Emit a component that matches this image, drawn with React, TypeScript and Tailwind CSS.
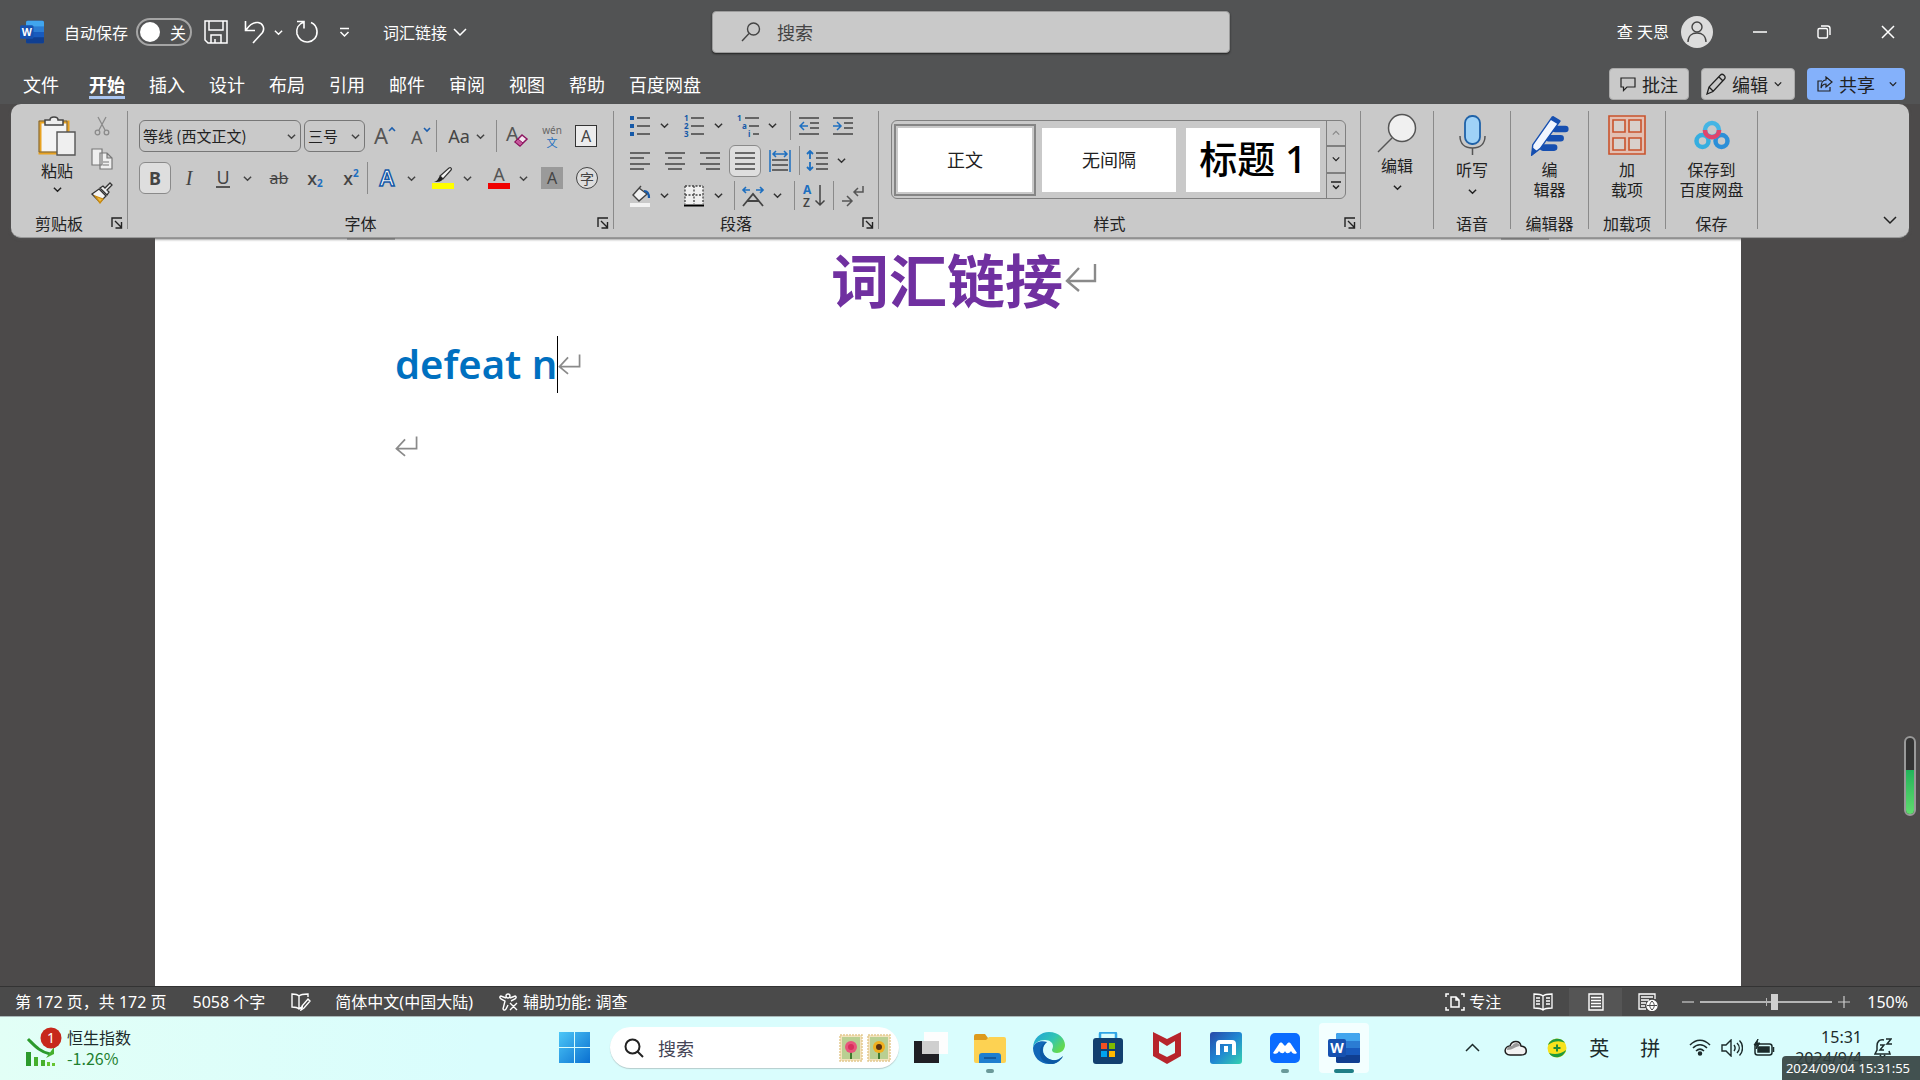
import React from 'react';

type Kids = { children?: React.ReactNode };

/* ---------- Small shared pieces ---------- */

const Caret = ({ size = 9 }: { size?: number }) => (
  <svg width={size} height={size} viewBox="0 0 10 10" fill="none" stroke="currentColor" strokeWidth="1.6">
    <path d="M1 3l4 4 4-4" />
  </svg>
);

const Launcher = ({ label }: { label: string }) => (
  <button aria-label={label} className="mr-1 shrink-0 text-[#222]">
    <svg width="12" height="12" viewBox="0 0 12 12" fill="none" stroke="currentColor" strokeWidth="1.4">
      <path d="M1 10V1h10M4 4l6 6M10.500 5v6H4.500" />
    </svg>
  </button>
);

const Sep = () => <div className="w-px self-stretch bg-[#8a8a8a]" />;

const Tool = ({ label, active, children }: Kids & { label: string; active?: boolean }) => (
  <button
    aria-label={label}
    className={
      active
        ? 'flex h-8 w-8 items-center justify-center rounded-md border border-[#8a8a8a] bg-[#dedede]'
        : 'flex h-8 w-8 items-center justify-center rounded-md'
    }
  >
    {children}
  </button>
);

const SplitTool = ({ label, children }: Kids & { label: string }) => (
  <div className="flex h-8 items-center">
    <button aria-label={label} className="flex h-8 w-8 items-center justify-center">
      {children}
    </button>
    <button aria-label={`${label}选项`} className="flex h-8 w-4 items-center justify-center">
      <Caret />
    </button>
  </div>
);

const GroupFooter = ({ label, launcher = true }: { label: string; launcher?: boolean }) => (
  <div className="mt-auto flex h-3 items-center">
    <span className={launcher ? 'flex-1 pr-1 text-center text-base leading-3 whitespace-nowrap' : 'flex-1 text-center text-base leading-3 whitespace-nowrap'}>
      {label}
    </span>
    {launcher && <Launcher label={`${label}设置`} />}
  </div>
);

const WordIcon = ({ size }: { size: number }) => (
  <svg width={size} height={size} viewBox="0 0 32 32">
    <rect x="8" y="1" width="24" height="30" rx="2" fill="#185abd" />
    <path d="M10 1h20a2 2 0 012 2v6H8V3a2 2 0 012-2z" fill="#41a5ee" />
    <path d="M8 9h24v7H8z" fill="#2b7cd3" />
    <path d="M8 23h24v6a2 2 0 01-2 2H10a2 2 0 01-2-2z" fill="#103f91" />
    <rect x="0" y="7" width="18" height="18" rx="2" fill="#1651b0" />
    <text x="9" y="21" textAnchor="middle" fontSize="14" fontWeight="700" fill="#fff" fontFamily="Open Sans, sans-serif">
      W
    </text>
  </svg>
);

const ReturnMark = ({ width, height }: { width: number; height: number }) => (
  <svg width={width} height={height} viewBox="0 0 32 28" fill="none" stroke="#8a8a8a" strokeWidth="2.400">
    <path d="M30 0v17H2M14 4L2 17l12 10" />
  </svg>
);

/* ---------- Title bar ---------- */

const TitleBar = () => (
  <div className="grid h-16 grid-cols-[712fr_518fr_690fr] items-center text-white">
    <div className="flex items-center pl-5 text-base leading-5 whitespace-nowrap">
      <WordIcon size={24} />
      <label className="ml-5 flex items-center gap-2">
        自动保存
        <input type="checkbox" className="sr-only" />
        <span className="flex h-7 w-14 items-center justify-between rounded-full border-2 border-[#a5a5a5] pr-1 pl-0.5">
          <span className="h-5 w-5 rounded-full bg-white" />
          <span>关</span>
        </span>
      </label>
      <button aria-label="保存" className="ml-3">
        <svg width="24" height="24" viewBox="0 0 24 24" fill="none" stroke="currentColor" strokeWidth="1.5">
          <path d="M1 1h22v22H4l-3-3zM5 1v9h14V1M7 23v-8h10v8M11 19v4" />
        </svg>
      </button>
      <button aria-label="撤消" className="ml-4">
        <svg width="22" height="24" viewBox="0 0 22 24" fill="none" stroke="currentColor" strokeWidth="1.6">
          <path d="M1.500 1v9.500H11M2 10C6 4 10 2 14 2.500c5 .7 7 6 4.500 10L9 23" />
        </svg>
      </button>
      <button aria-label="撤消选项" className="ml-2">
        <Caret />
      </button>
      <button aria-label="重复" className="ml-3">
        <svg width="24" height="24" viewBox="0 0 24 24" fill="none" stroke="currentColor" strokeWidth="1.6">
          <path d="M2 1.500h7v7M9 2C3 4 1 9 2 14c1.500 5 6 8.500 11 8 5.500-.7 9.500-5 9-11-.3-4-2.500-7-6-8.500" />
        </svg>
      </button>
      <button aria-label="自定义快速访问工具栏" className="ml-5">
        <svg width="11" height="11" viewBox="0 0 11 11" fill="none" stroke="currentColor" strokeWidth="1.5">
          <path d="M1 1.500h9M1.500 5l4 4 4-4" />
        </svg>
      </button>
      <button className="ml-[33px] flex items-center gap-1.5">
        词汇链接
        <svg width="14" height="8" viewBox="0 0 14 8" fill="none" stroke="currentColor" strokeWidth="1.5">
          <path d="M1 1l6 6 6-6" />
        </svg>
      </button>
    </div>

    <label className="flex h-[42px] items-center gap-4 rounded border border-[#9c9c9c] bg-[#c9c9c9] pl-7 text-[#444] shadow-[0_1px_2px_#222]">
      <svg width="20" height="20" viewBox="0 0 20 20" fill="none" stroke="currentColor" strokeWidth="1.4">
        <circle cx="12.500" cy="7" r="6" />
        <path d="M8 11.500L1 19" />
      </svg>
      <input
        type="search"
        aria-label="搜索"
        placeholder="搜索"
        className="min-w-0 flex-1 bg-transparent text-lg leading-6 outline-none placeholder:text-[#444]"
      />
    </label>

    <div className="flex items-center justify-end pr-[25px]">
      <button className="mr-10 flex items-center gap-3 font-['Noto_Sans','Noto_Sans_CJK_SC',sans-serif] text-base leading-5 whitespace-nowrap">
        查 天恩
        <span className="flex h-8 w-8 items-center justify-center rounded-full bg-[#dcdcdc]">
          <svg width="20" height="22" viewBox="0 0 20 22" fill="none" stroke="#444" strokeWidth="1.4">
            <circle cx="10" cy="6" r="5" />
            <path d="M1 21c0-6 4-9 9-9s9 3 9 9" />
          </svg>
        </span>
      </button>
      <div className="flex items-center gap-[50px]">
        <button aria-label="最小化">
          <svg width="14" height="14" viewBox="0 0 14 14" stroke="currentColor" strokeWidth="1.500">
            <path d="M0 7h14" />
          </svg>
        </button>
        <button aria-label="还原">
          <svg width="14" height="14" viewBox="0 0 14 14" fill="none" stroke="currentColor" strokeWidth="1.400">
            <rect x="1" y="3.500" width="9.500" height="9.500" rx="1.500" />
            <path d="M4 1h6.500c1.700 0 2.500 1 2.500 2.500V10" />
          </svg>
        </button>
        <button aria-label="关闭">
          <svg width="14" height="14" viewBox="0 0 14 14" stroke="currentColor" strokeWidth="1.500">
            <path d="M1 1l12 12M13 1L1 13" />
          </svg>
        </button>
      </div>
    </div>
  </div>
);

const tabs = ['开始', '插入', '设计', '布局', '引用', '邮件', '审阅', '视图', '帮助', '百度网盘'];

const TabRow = () => (
  <div className="flex h-10 items-center pr-[15px] pl-[23px] text-lg leading-6 text-white">
    <button className="mr-[30px]">文件</button>
    <nav className="flex gap-6">
      {tabs.map((t) => (
        <button
          key={t}
          className={
            t === '开始'
              ? 'border-b-[3px] border-[#a9c4ee] pt-[3px] font-bold'
              : 'border-b-[3px] border-transparent pt-[3px]'
          }
        >
          {t}
        </button>
      ))}
    </nav>
    <div className="ml-auto flex gap-3 text-[#222]">
      <button className="flex h-8 items-center gap-1.5 rounded border border-[#aaa] bg-[#c9c9c9] px-2.5">
        <svg width="16" height="16" viewBox="0 0 16 16" fill="none" stroke="currentColor" strokeWidth="1.2">
          <path d="M1 2h14v9H7l-3.500 3.500V11H1z" />
        </svg>
        批注
      </button>
      <button className="flex h-8 items-center gap-1.5 rounded border border-[#aaa] bg-[#c9c9c9] pr-3 pl-1">
        <svg width="20" height="22" viewBox="0 0 20 22" fill="none" stroke="currentColor" strokeWidth="1.3">
          <path d="M1 21l2-7L14.500 2c2-2 6 1.500 4 4L7 18.500zM13 4l4 4M3 14l4 4" />
        </svg>
        编辑
        <Caret size={8} />
      </button>
      <button className="flex h-8 items-center gap-1.5 rounded bg-[#84b1fb] pr-2 pl-2.5">
        <svg width="16" height="16" viewBox="0 0 16 16" fill="none" stroke="currentColor" strokeWidth="1.2">
          <path d="M5 5H1v10h12v-4M9 4V1l6 5-6 5V8C7 8 5 9 4 12c0-5 2-8 5-8z" />
        </svg>
        共享
        <span className="ml-2">
          <Caret size={8} />
        </span>
      </button>
    </div>
  </div>
);

/* ---------- Ribbon groups ---------- */

const ClipboardGroup = () => (
  <section className="flex w-[117px] shrink-0 flex-col border-r border-[#8a8a8a]">
    <div className="flex">
      <button className="ml-7 flex w-9 flex-col items-center pt-[5px] text-base leading-5">
        <svg width="38" height="40" viewBox="0 0 38 40" fill="none">
          <path d="M2 6h28v31H2z" fill="#f4f4f4" stroke="#e8a221" strokeWidth="3" />
          <path d="M2 6h28v31H2z" stroke="#555" strokeWidth=".8" transform="translate(-1 -1)" />
          <path d="M7 9V4h5c0-4 8-4 8 0h5v5z" fill="#eee" stroke="#444" strokeWidth="1.500" />
          <path d="M19 16h18v23H19z" fill="#efefef" stroke="#555" strokeWidth="1.400" />
        </svg>
        <span className="mt-1 whitespace-nowrap">粘贴</span>
        <span className="mt-[5px]">
          <Caret />
        </span>
      </button>
      <div className="ml-4 flex flex-col items-center gap-3 pt-[5px]">
        <button aria-label="剪切">
          <svg width="20" height="20" viewBox="0 0 20 20" fill="none" stroke="#8a8a8a" strokeWidth="1.300">
            <path d="M6 1l7 13M14 1L7 14" />
            <circle cx="5.500" cy="16.500" r="2.300" />
            <circle cx="14.500" cy="16.500" r="2.300" />
          </svg>
        </button>
        <button aria-label="复制">
          <svg width="22" height="22" viewBox="0 0 22 22" fill="#efefef" stroke="#777" strokeWidth="1.200">
            <path d="M1 1h10v16H1zM9 5h7l5 5v11H9zM16 5v5h5M12 14h6M12 17h6" />
          </svg>
        </button>
        <button aria-label="格式刷">
          <svg width="22" height="22" viewBox="0 0 22 22" fill="none" stroke="#333" strokeWidth="1.300">
            <path d="M1 12l7-5 7 7-6 6z" fill="#f4f4f4" />
            <path d="M4 14l8 3-3 4z" fill="#f0b93a" stroke="#c98b14" />
            <path d="M9 6l3-2 2 2 5-5 2 2-5 5 2 2-2 3z" fill="#eee" />
          </svg>
        </button>
      </div>
    </div>
    <GroupFooter label="剪贴板" />
  </section>
);

const FontSelect = ({ id, value, wide }: { id: string; value: string; wide?: boolean }) => (
  <div
    className={
      wide
        ? 'grid h-8 w-[162px] items-center rounded-md border border-[#777]'
        : 'grid h-8 w-[61px] items-center rounded-md border border-[#777]'
    }
  >
    <select id={id} aria-label={id} className="col-start-1 row-start-1 appearance-none pl-[3px] text-[15px] leading-6 text-[#222]">
      <option>{value}</option>
    </select>
    <span className="pointer-events-none col-start-1 row-start-1 mr-1 justify-self-end">
      <Caret />
    </span>
  </div>
);

const FontGroup = () => (
  <section className="flex w-[486px] shrink-0 flex-col border-r border-[#8a8a8a] text-[#444]">
    <div className="flex flex-col gap-2.5 pt-[9px] pl-[11px]">
      <div className="flex h-8 items-center">
        <FontSelect id="字体名称" value="等线 (西文正文)" wide />
        <div className="ml-[3px]">
          <FontSelect id="字号" value="三号" />
        </div>
        <button aria-label="增大字号" className="flex w-10 justify-center">
          <svg width="22" height="22" viewBox="0 0 22 22" className="overflow-visible">
            <text x="0" y="19" fontSize="22" fill="#555" fontFamily="Noto Sans, sans-serif">A</text>
            <path d="M15 6l3-3 3 3" fill="none" stroke="#1d5fae" strokeWidth="1.600" />
          </svg>
        </button>
        <button aria-label="减小字号" className="flex w-[31px] justify-center">
          <svg width="20" height="22" viewBox="0 0 20 22" className="overflow-visible">
            <text x="0" y="19" fontSize="18" fill="#555" fontFamily="Noto Sans, sans-serif">A</text>
            <path d="M13 3l3 3 3-3" fill="none" stroke="#1d5fae" strokeWidth="1.600" />
          </svg>
        </button>
        <Sep />
        <button aria-label="更改大小写" className="flex w-[59px] items-center justify-center gap-1.5 font-['Noto_Sans'] text-lg leading-6">
          Aa
          <Caret />
        </button>
        <Sep />
        <button aria-label="清除所有格式" className="ml-0.5 flex w-9 justify-center">
          <svg width="22" height="24" viewBox="0 0 22 24" className="overflow-visible">
            <text x="0" y="17" fontSize="20" fill="#555" fontFamily="Noto Sans, sans-serif">A</text>
            <path d="M9 18l7-7 5 4-7 7z" fill="#f4e6ef" stroke="#8d1560" strokeWidth="1.500" />
            <path d="M9 18l3-3 5 4-3 3z" fill="#c5579a" stroke="#8d1560" />
          </svg>
        </button>
        <button aria-label="拼音指南" className="flex w-[34px] flex-col items-center">
          <span className="font-['Noto_Sans'] text-[10px] leading-3 text-[#666]">wén</span>
          <span className="text-[11px] leading-3 text-[#1d6fc0]">文</span>
        </button>
        <button aria-label="字符边框" className="flex w-[34px] justify-center">
          <span className="flex h-[22px] w-[22px] items-center justify-center border border-[#333] bg-[#ececec] font-['Noto_Sans'] text-base leading-5">
            A
          </span>
        </button>
      </div>
      <div className="flex h-8 items-center">
        <Tool label="加粗" active>
          <span className="font-['Noto_Sans'] text-lg leading-6 font-bold">B</span>
        </Tool>
        <div className="ml-0.5">
          <Tool label="倾斜">
            <span className="font-['Liberation_Serif'] text-xl leading-6 italic">I</span>
          </Tool>
        </div>
        <div className="ml-0.5">
          <SplitTool label="下划线">
            <span className="border-b-2 border-[#555] font-['Noto_Sans'] text-lg leading-[18px]">U</span>
          </SplitTool>
        </div>
        <div className="ml-2 flex gap-1">
          <Tool label="删除线">
            <span className="font-['Noto_Sans'] text-base leading-5 line-through">ab</span>
          </Tool>
          <Tool label="下标">
            <span className="flex items-end font-['Noto_Sans'] text-lg leading-5 font-medium">
              x<span className="text-[10px] leading-[10px] font-bold text-[#1d6fc0]">2</span>
            </span>
          </Tool>
          <Tool label="上标">
            <span className="flex items-start font-['Noto_Sans'] text-lg leading-5 font-medium">
              x<span className="text-[10px] leading-[10px] font-bold text-[#1d6fc0]">2</span>
            </span>
          </Tool>
        </div>
        <Sep />
        <div className="ml-[3px] flex gap-2">
          <SplitTool label="文本效果">
            <svg width="22" height="22" viewBox="0 0 22 22" className="overflow-visible">
              <text x="11" y="19" textAnchor="middle" fontSize="22" fontWeight="600" fill="#fff" stroke="#1559a8" strokeWidth="1.500" fontFamily="Noto Sans, sans-serif">A</text>
            </svg>
          </SplitTool>
          <SplitTool label="文本突出显示颜色">
            <svg width="22" height="22" viewBox="0 0 22 22">
              <path d="M0 16h22v6H0z" fill="#ff0" />
              <path d="M8 9l9-8c2-1 3 1 2 2l-8 9z" fill="#f4f4f4" stroke="#333" strokeWidth="1.200" />
              <path d="M8 9l3 3c-2 3-5 3-9 3 4-1 4-4 6-6z" fill="#222" />
            </svg>
          </SplitTool>
          <SplitTool label="字体颜色">
            <svg width="22" height="22" viewBox="0 0 22 22" className="overflow-visible">
              <path d="M0 16h22v6H0z" fill="#f00000" />
              <text x="11" y="14" textAnchor="middle" fontSize="18" fill="#555" fontFamily="Noto Sans, sans-serif">A</text>
            </svg>
          </SplitTool>
        </div>
        <div className="ml-[5px] flex gap-[3px]">
          <Tool label="字符底纹">
            <span className="flex h-[22px] w-[22px] items-center justify-center bg-[#9a9a9a] font-['Noto_Sans'] text-base leading-5">A</span>
          </Tool>
          <Tool label="带圈字符">
            <span className="flex h-[22px] w-[22px] items-center justify-center rounded-full border border-[#444] bg-[#ddd] text-sm leading-4">字</span>
          </Tool>
        </div>
      </div>
    </div>
    <div className="mt-auto text-[#222]">
      <GroupFooter label="字体" />
    </div>
  </section>
);

const Lines = ({ d }: { d: string }) => (
  <svg width="20" height="20" viewBox="0 0 20 20" stroke="#444" strokeWidth="1.500">
    <path d={d} />
  </svg>
);

const ParagraphGroup = () => (
  <section className="flex w-[265px] shrink-0 flex-col border-r border-[#8a8a8a]">
    <div className="flex flex-col gap-[6px] pl-2.5 text-[#333]">
      <div className="flex h-[29px] items-center gap-1.5">
        <SplitTool label="项目符号">
          <svg width="22" height="22" viewBox="0 0 22 22">
            <path d="M1 1h4v4H1zM1 9h4v4H1zM1 17h4v4H1z" fill="#1559a8" />
            <path d="M8 3h13M8 11h13M8 19h13" stroke="#444" strokeWidth="1.500" />
          </svg>
        </SplitTool>
        <SplitTool label="编号">
          <svg width="22" height="22" viewBox="0 0 22 22" className="overflow-visible" fill="#1559a8" fontSize="8" fontWeight="700" fontFamily="Noto Sans, sans-serif">
            <text x="1" y="6">1</text>
            <text x="1" y="14">2</text>
            <text x="1" y="22">3</text>
            <path d="M8 3h13M8 11h13M8 19h13" stroke="#444" strokeWidth="1.500" />
          </svg>
        </SplitTool>
        <SplitTool label="多级列表">
          <svg width="22" height="22" viewBox="0 0 22 22" className="overflow-visible" fill="#1559a8" fontSize="8" fontWeight="700" fontFamily="Noto Sans, sans-serif">
            <text x="0" y="6">1</text>
            <text x="5" y="14">a</text>
            <text x="11" y="22">i</text>
            <path d="M8 3h14M12 11h10M16 19h6" stroke="#444" strokeWidth="1.500" />
          </svg>
        </SplitTool>
        <div className="ml-1 self-stretch border-l border-[#8a8a8a]" />
        <div className="-ml-1 flex gap-0.5">
          <Tool label="减少缩进量">
            <svg width="20" height="20" viewBox="0 0 20 20" fill="none" stroke="#444" strokeWidth="1.500">
              <path d="M0 2h20M11 7h9M11 12h9M0 18h20" />
              <path d="M9 10H1M5 6l-4 4 4 4" stroke="#1d6fc0" />
            </svg>
          </Tool>
          <Tool label="增加缩进量">
            <svg width="20" height="20" viewBox="0 0 20 20" fill="none" stroke="#444" strokeWidth="1.500">
              <path d="M0 2h20M11 7h9M11 12h9M0 18h20" />
              <path d="M0 10h8M4 6l4 4-4 4" stroke="#1d6fc0" />
            </svg>
          </Tool>
        </div>
      </div>
      <div className="flex h-[29px] items-center gap-[3px]">
        <Tool label="左对齐">
          <Lines d="M0 2h20M0 7h14M0 13h20M0 18h14" />
        </Tool>
        <Tool label="居中">
          <Lines d="M0 2h20M3 7h14M0 13h20M3 18h14" />
        </Tool>
        <Tool label="右对齐">
          <Lines d="M0 2h20M6 7h14M0 13h20M6 18h14" />
        </Tool>
        <Tool label="两端对齐" active>
          <Lines d="M0 2h20M0 7h20M0 13h20M0 18h20" />
        </Tool>
        <Tool label="分散对齐">
          <svg width="22" height="22" viewBox="0 0 22 22" fill="none" stroke="#444" strokeWidth="1.500">
            <path d="M3 10h16M3 15h16M3 20h16" />
            <path d="M1 0v22M21 0v22M4 4h14M7 1L4 4l3 3M15 1l3 3-3 3" stroke="#1d6fc0" />
          </svg>
        </Tool>
        <Sep />
        <div className="-ml-0.5">
          <SplitTool label="行和段落间距">
            <svg width="22" height="22" viewBox="0 0 22 22" fill="none" stroke="#444" strokeWidth="1.500">
              <path d="M10 3h12M10 8h12M10 14h12M10 19h12" />
              <path d="M4 1v8M1 4l3-3 3 3M4 12v8M1 17l3 3 3-3" stroke="#1d6fc0" strokeWidth="1.800" />
            </svg>
          </SplitTool>
        </div>
      </div>
      <div className="flex h-[29px] items-center">
        <SplitTool label="底纹">
          <svg width="22" height="22" viewBox="0 0 22 22" fill="none">
            <path d="M1 18h20v4H1z" fill="#f2f2f2" />
            <path d="M10 3l8 6-8 7-6-6 8-9" fill="#f2f2f2" stroke="#444" strokeWidth="1.400" />
            <path d="M15 6c4 0 5 3 5 7" stroke="#1559a8" strokeWidth="2.200" />
          </svg>
        </SplitTool>
        <div className="ml-1.5">
          <SplitTool label="边框">
            <svg width="20" height="22" viewBox="0 0 20 22" fill="none">
              <path d="M1 1h18v19H1z" fill="#f0f0f0" />
              <path d="M1 1h18M1 1v18M19 1v18M10 1v18M1 10h18" stroke="#444" strokeDasharray="2 1.500" strokeWidth="1.300" />
              <path d="M0 20.500h20" stroke="#000" strokeWidth="2" />
            </svg>
          </SplitTool>
        </div>
        <div className="ml-2 self-stretch border-l border-[#8a8a8a]" />
        <div className="mr-[9px] ml-0.5">
          <SplitTool label="中文版式">
            <svg width="24" height="22" viewBox="0 0 24 22" fill="none">
              <path d="M2 21L12 9l10 12M6 16h12" stroke="#444" strokeWidth="1.800" />
              <path d="M9 5H2M5 2L2 5l3 3M15 5h7M19 2l3 3-3 3" stroke="#1d6fc0" strokeWidth="1.600" />
            </svg>
          </SplitTool>
        </div>
        <Sep />
        <div className="mx-[3px]">
          <Tool label="排序">
            <svg width="22" height="24" viewBox="0 0 22 24" fill="none" className="overflow-visible">
              <text x="0" y="10" fontSize="12" fontWeight="700" fill="#1d6fc0" fontFamily="Noto Sans, sans-serif">A</text>
              <text x="0" y="23" fontSize="12" fontWeight="600" fill="#444" fontFamily="Noto Sans, sans-serif">Z</text>
              <path d="M17 1v20M12.500 16.500L17 21l4.500-4.500" stroke="#444" strokeWidth="1.500" />
            </svg>
          </Tool>
        </div>
        <Sep />
        <div className="ml-[3px]">
          <Tool label="显示编辑标记">
            <svg width="24" height="22" viewBox="0 0 24 22" fill="none" stroke="#555" strokeWidth="1.500">
              <path d="M22 1v6h-9M17 3l-4 4 4 4M1 16h10M6 11l5 5-5 5" />
            </svg>
          </Tool>
        </div>
      </div>
    </div>
    <GroupFooter label="段落" />
  </section>
);

const StylesGroup = () => (
  <section className="flex w-[482px] shrink-0 flex-col border-r border-[#8a8a8a]">
    <div className="mt-[9px] ml-3 flex h-[79px] w-[455px] overflow-hidden rounded-md border border-[#808080] bg-[#c9c9c9]">
      <div className="flex flex-1 items-center gap-0.5 pl-0.5 text-lg leading-6 text-[#222]">
        <button className="h-[72px] w-[142px] border-2 border-[#858585] p-0.5">
          <span className="flex h-full items-center justify-center bg-white pb-0.5">正文</span>
        </button>
        <button className="h-[72px] w-[142px] p-1">
          <span className="flex h-full items-center justify-center bg-white pb-0.5">无间隔</span>
        </button>
        <button className="h-[72px] w-[142px] p-1">
          <span className="flex h-full items-center justify-center bg-white pb-1 font-['Noto_Sans','Noto_Sans_CJK_SC',sans-serif] text-[38px] leading-10 font-medium text-black">
            标题 1
          </span>
        </button>
      </div>
      <div className="flex w-[19px] flex-col divide-y-2 divide-[#808080] border-l border-[#808080]">
        <button aria-label="上一行" className="flex flex-1 items-center justify-center text-[#888]">
          <svg width="8" height="8" viewBox="0 0 10 10" fill="none" stroke="currentColor" strokeWidth="1.500">
            <path d="M1 7l4-4 4 4" />
          </svg>
        </button>
        <button aria-label="下一行" className="flex flex-1 items-center justify-center">
          <Caret size={8} />
        </button>
        <button aria-label="其他样式" className="flex flex-1 items-center justify-center">
          <svg width="10" height="10" viewBox="0 0 10 10" fill="none" stroke="currentColor" strokeWidth="1.500">
            <path d="M0 1h10M2 4.500l3 3 3-3" />
          </svg>
        </button>
      </div>
    </div>
    <GroupFooter label="样式" />
  </section>
);

const BigGroup = ({ width, label, icon, lines, caret }: { width: string; label: string; icon: React.ReactNode; lines: string[]; caret?: boolean }) => (
  <section className={`flex shrink-0 flex-col border-r border-[#8a8a8a] ${width}`}>
    <button className="flex flex-col items-center text-base">
      <span className={label ? 'flex h-12 items-center' : 'flex h-11 items-center'}>{icon}</span>
      {lines.map((l) => (
        <span key={l} className="leading-5 whitespace-nowrap">
          {l}
        </span>
      ))}
      {caret && (
        <span className="mt-2">
          <Caret />
        </span>
      )}
    </button>
    {label && <GroupFooter label={label} launcher={false} />}
  </section>
);

const MagnifierIcon = () => (
  <svg width="40" height="40" viewBox="0 0 40 40" fill="none" stroke="#555" strokeWidth="1.500">
    <circle cx="25" cy="15" r="13.500" fill="#f0f0f0" />
    <path d="M15 25L1 39" />
  </svg>
);

const MicIcon = () => (
  <svg width="27" height="40" viewBox="0 0 27 40" fill="none">
    <rect x="6" y="1" width="15" height="28" rx="7" fill="#9fd2f7" stroke="#1f62a8" strokeWidth="1.800" />
    <path d="M1 21c0 8 5 12 12.500 12S26 29 26 21M13.500 33v7" stroke="#555" strokeWidth="1.500" />
  </svg>
);

const EditorIcon = () => (
  <svg width="41" height="41" viewBox="0 0 42 44" fill="none">
    <path d="M27 15h11M20 25h13M14 35h12" stroke="#164fb0" strokeWidth="7" strokeLinecap="round" />
    <path d="M3 32L24 2l8 5L11 36l-9 7z" fill="#f1f6ff" stroke="#164fb0" strokeWidth="1.500" />
    <path d="M22 5l3-4 8 5-3 4zM3 35l5 4-7 5z" fill="#164fb0" />
  </svg>
);

const AddinsIcon = () => (
  <svg width="38" height="40" viewBox="0 0 38 40" fill="#e3bfb2" stroke="#c9532c" strokeWidth="1.600">
    <path d="M1 1h36v38H1z" />
    <path d="M5 5h12v12H5zM21 5h12v12H21zM5 23h12v12H5zM21 23h12v12H21z" fill="#d8d0cc" />
  </svg>
);

const NetdiskIcon = () => (
  <svg width="36" height="30" viewBox="0 0 36 30" fill="none" strokeWidth="4.500">
    <circle cx="8.500" cy="21" r="6" stroke="#35aee0" />
    <circle cx="27.500" cy="21" r="6" stroke="#2b8fd8" />
    <circle cx="18" cy="10" r="7" stroke="#45b5e4" />
    <path d="M11 10c0 9.500 14 9.500 14 0" stroke="#e0446c" />
  </svg>
);

const Ribbon = () => (
  <div className="relative z-10 mx-[11px] flex h-[134px] rounded-[10px] border-b border-[#999] bg-[#c9c9c9] pt-[7px] pb-2 text-[#222] shadow-[0_1px_3px_#555]">
    <ClipboardGroup />
    <FontGroup />
    <ParagraphGroup />
    <StylesGroup />
    <BigGroup width="w-[73px]" label="" icon={<MagnifierIcon />} lines={['编辑']} caret />
    <BigGroup width="w-[77px]" label="语音" icon={<MicIcon />} lines={['听写']} caret />
    <BigGroup width="w-[78px]" label="编辑器" icon={<EditorIcon />} lines={['编', '辑器']} />
    <BigGroup width="w-[77px]" label="加载项" icon={<AddinsIcon />} lines={['加', '载项']} />
    <BigGroup width="w-[92px]" label="保存" icon={<NetdiskIcon />} lines={['保存到', '百度网盘']} />
    <button aria-label="折叠功能区" className="mr-3 mb-1 ml-auto self-end">
      <svg width="14" height="9" viewBox="0 0 14 9" fill="none" stroke="currentColor" strokeWidth="1.500">
        <path d="M1 1l6 6 6-6" />
      </svg>
    </button>
  </div>
);

/* ---------- Document ---------- */

const Document = () => (
  <main className="relative flex flex-1 justify-center bg-[#4c4a4a] pr-6">
    <article className="w-full max-w-[1586px] bg-white px-[240px]">
      {/* crop marks at the text margins */}
      <div className="-mx-12 mb-1 flex h-0.5 justify-between">
        <span className="w-12 bg-[#b5b5b5]" />
        <span className="w-12 bg-[#b5b5b5]" />
      </div>
      <h1 className="flex items-center justify-center gap-0.5 pl-8 text-[58px] leading-[68px] font-bold text-[#7030a0]">
        词汇链接
        <ReturnMark width={32} height={28} />
      </h1>
      <p className="mt-[22px] flex items-center font-['Noto_Sans'] text-[40px] leading-[60px] font-semibold text-[#0070c0]">
        defeat n
        <span className="h-[57px] w-px bg-black" />
        <ReturnMark width={23} height={21} />
      </p>
      <p className="flex h-[104px] items-center">
        <ReturnMark width={23} height={21} />
      </p>
    </article>
    <div className="absolute right-1 bottom-[170px] flex h-20 w-3 flex-col justify-end overflow-hidden rounded-md border-2 border-[#999] bg-[#333]">
      <div className="h-11 bg-linear-to-b from-[#1fb45a] to-[#5fdc6e]" />
    </div>
  </main>
);

/* ---------- Status bar ---------- */

const StatusBar = () => (
  <div className="flex h-[30px] items-center border-t border-[#333] bg-[#4a4a4a] pr-3 pl-[15px] font-['Noto_Sans','Noto_Sans_CJK_SC',sans-serif] text-base leading-5 whitespace-nowrap text-white">
    <span>第 172 页，共 172 页</span>
    <span className="ml-[26px]">5058 个字</span>
    <button aria-label="校对" className="ml-[26px]">
      <svg width="20" height="18" viewBox="0 0 20 18" fill="none" stroke="currentColor" strokeWidth="1.400">
        <path d="M8 3C6 1 3 1 1 1v13c2 0 5 0 7 2 1-1 2-2 4-2M8 3c2-2 5-2 9-2v3M8 3v13M17 6l2 2-6 7-3 2 1-4z" />
      </svg>
    </button>
    <button className="ml-6">简体中文(中国大陆)</button>
    <button className="ml-[26px] flex items-center gap-1">
      <svg width="20" height="18" viewBox="0 0 20 18" fill="none" stroke="currentColor" strokeWidth="1.400">
        <circle cx="9" cy="3" r="2" />
        <path d="M7 5L2 3C0 4 1 5 2 6l4 2-2 8c1 2 2 1 3 0l2-4M11 5l5-2c2 1 1 2 0 3l-4 2M11 10l7 7M18 10l-7 7" />
      </svg>
      辅助功能: 调查
    </button>
    <button className="ml-auto flex items-center gap-1">
      <svg width="20" height="18" viewBox="0 0 20 18" fill="none" stroke="currentColor" strokeWidth="1.500">
        <path d="M4 1H1v3M16 1h3v3M4 17H1v-3M16 17h3v-3M6 4h5l3 3v7H6zM11 4v3h3" />
      </svg>
      专注
    </button>
    <button aria-label="阅读视图" className="ml-8">
      <svg width="20" height="18" viewBox="0 0 20 18" fill="none" stroke="currentColor" strokeWidth="1.300">
        <path d="M10 3C8 1 4 1 1 1v14c3 0 7 0 9 2 2-2 6-2 9-2V1c-3 0-7 0-9 2zM10 3v14M3 5h4M3 8h4M3 11h4M13 5h4M13 8h4M13 11h4" />
      </svg>
    </button>
    <button aria-label="页面视图" className="ml-4 flex h-[28px] w-[53px] items-center justify-center bg-[#555]">
      <svg width="16" height="18" viewBox="0 0 16 18" fill="none" stroke="currentColor" strokeWidth="1.400">
        <path d="M1 1h14v16H1zM3 4.500h10M3 7.500h10M3 10.500h10M3 13.500h10" />
      </svg>
    </button>
    <button aria-label="Web 版式视图" className="ml-4">
      <svg width="20" height="18" viewBox="0 0 20 18" fill="none" stroke="currentColor" strokeWidth="1.300">
        <path d="M8 16H1V1h16v5M3 4h12M3 7h8M3 10h5M3 13h4" />
        <circle cx="14" cy="12.500" r="5" fill="#fff" />
        <path d="M9 12.500h10M14 8c-3 3-3 6 0 9 3-3 3-6 0-9" stroke="#4a4a4a" strokeWidth="1" />
      </svg>
    </button>
    <button aria-label="缩小" className="ml-6">
      <svg width="12" height="12" viewBox="0 0 12 12" stroke="#ccc" strokeWidth="1.200">
        <path d="M0 6h12" />
      </svg>
    </button>
    <div className="mx-1.5 grid items-center">
      <span className="col-start-1 row-start-1 ml-[66px] h-2 w-px bg-[#b5b5b5]" />
      <input
        type="range"
        aria-label="显示比例"
        defaultValue={57}
        className="col-start-1 row-start-1 h-5 w-[132px] appearance-none bg-[linear-gradient(#b5b5b5,#b5b5b5)] bg-[length:100%_2px] bg-center bg-no-repeat [&::-webkit-slider-thumb]:h-4 [&::-webkit-slider-thumb]:w-[7px] [&::-webkit-slider-thumb]:appearance-none [&::-webkit-slider-thumb]:bg-[#d0d0d0]"
      />
    </div>
    <button aria-label="放大">
      <svg width="12" height="12" viewBox="0 0 12 12" stroke="#ccc" strokeWidth="1.200">
        <path d="M0 6h12M6 0v12" />
      </svg>
    </button>
    <button className="ml-[17px]">150%</button>
  </div>
);

/* ---------- Taskbar ---------- */

const StoreIcon = () => (
  <svg width="32" height="32" viewBox="0 0 32 32">
    <path d="M8 8V2a1.500 1.500 0 011.500-1.500h13A1.500 1.500 0 0124 2v6" fill="none" stroke="#2fa5e6" strokeWidth="2.500" />
    <rect x="1" y="6" width="30" height="26" rx="3" fill="#12406f" />
    <path d="M9 11h6v6H9z" fill="#f25022" />
    <path d="M17 11h6v6h-6z" fill="#7fba00" />
    <path d="M9 19h6v6H9z" fill="#00a4ef" />
    <path d="M17 19h6v6h-6z" fill="#ffb900" />
  </svg>
);

const EdgeIcon = () => (
  <svg width="32" height="32" viewBox="0 0 32 32">
    <defs>
      <linearGradient id="edgeTop" x1="0" y1="0" x2="1" y2="0.6">
        <stop offset="0" stopColor="#1f9fdc" />
        <stop offset=".6" stopColor="#31c5b4" />
        <stop offset="1" stopColor="#63d94f" />
      </linearGradient>
    </defs>
    <path d="M0 16C0 6 8 0 16 0c10 0 16 7 16 13 0 5-4 8-8 8-3 0-5-1-5-3 0-1 1-2 1-4 0-3-3-6-8-6C6 8 1 11 0 16z" fill="url(#edgeTop)" />
    <path d="M0 16c0 9 7 16 16 16 4 0 8-1 11-4-9 2-17-3-17-10 0-4 2-6 4-8C7 8 1 11 0 16z" fill="#1268b8" />
    <path d="M14 10c-5 3-6 10-2 14 4 5 12 6 18 0-1 3-5 7-10 8-10 0-14-7-13-13 .5-4 3-8 7-9z" fill="#0c59a4" />
  </svg>
);

const apps: { name: string; state?: 'open' | 'active'; icon: React.ReactNode }[] = [
  {
    name: '任务视图',
    icon: (
      <svg width="34" height="32" viewBox="0 0 34 32">
        <path d="M10 0h24v22H10z" fill="#fdfdfd" />
        <path d="M0 9h25v22H0z" fill="#1f1f24" />
        <path d="M8 9h17v13H8z" fill="#cfcfcf" />
      </svg>
    ),
  },
  {
    name: '文件资源管理器',
    state: 'open',
    icon: (
      <svg width="32" height="32" viewBox="0 0 32 32">
        <path d="M0 4a2 2 0 012-2h9l3 4h16v8H0z" fill="#dd9a1c" />
        <path d="M0 8h12l3-3h15a2 2 0 012 2v22a2 2 0 01-2 2H2a2 2 0 01-2-2z" fill="#fdd252" />
        <path d="M5 31v-7a3 3 0 013-3h16a3 3 0 013 3v7z" fill="#1f7fcf" />
        <path d="M10 26h12" stroke="#155a9c" strokeWidth="2" />
      </svg>
    ),
  },
  { name: 'Edge', icon: <EdgeIcon /> },
  { name: 'Store', icon: <StoreIcon /> },
  {
    name: 'McAfee',
    icon: (
      <svg width="30" height="32" viewBox="0 0 30 32">
        <path d="M1 0l14 7 14-7v24l-14 8-14-8z" fill="#b7252c" />
        <path d="M7 9l8 5 8-5v12l-8 4-8-4z" fill="#d9fdfd" />
      </svg>
    ),
  },
  {
    name: 'Maxthon',
    icon: (
      <svg width="32" height="32" viewBox="0 0 32 32">
        <defs>
          <linearGradient id="mx" x1="0" y1="0" x2="1" y2="1">
            <stop offset="0" stopColor="#2a49a8" />
            <stop offset=".5" stopColor="#1f86d2" />
            <stop offset="1" stopColor="#35d2b0" />
          </linearGradient>
        </defs>
        <rect width="32" height="32" rx="3" fill="url(#mx)" />
        <path d="M8 23V12a2 2 0 012-2h12a2 2 0 012 2v11M16 14v6" fill="none" stroke="#fff" strokeWidth="4" />
      </svg>
    ),
  },
  {
    name: '腾讯会议',
    state: 'open',
    icon: (
      <svg width="30" height="30" viewBox="0 0 30 30">
        <rect width="30" height="30" rx="5" fill="#0a6cff" />
        <path d="M3 20l6-9c1-2 3-2 4 0l2 2 2-2c1-2 3-2 4 0l6 9c-3 2-5 0-6-2-2 3-5 3-6 0-1 3-4 3-6 0-1 2-3 4-6 2z" fill="#fff" />
      </svg>
    ),
  },
  { name: 'Word', state: 'active', icon: <WordIcon size={32} /> },
];

const Stamp = ({ center, petal }: { center: string; petal: string }) => (
  <svg width="24" height="28" viewBox="0 0 24 28">
    <path d="M1 1h22v26H1z" fill="#f3e3bd" stroke="#e3c98e" strokeDasharray="2 1" strokeWidth="1.500" />
    <path d="M3 3h18v22H3z" fill="#b9cf92" />
    <path d="M12 16v9" stroke="#3f7a2f" strokeWidth="2" />
    <circle cx="12" cy="13" r="6" fill={petal} />
    <circle cx="12" cy="13" r="3" fill={center} />
  </svg>
);

const Taskbar = () => (
  <footer className="relative grid h-16 grid-cols-[1fr_auto_1fr] items-center border-t border-[#a9b9b9] bg-linear-to-r from-[#e2fff6] via-[#d9fdfd] via-25% to-[#d9fdfd] pr-[18px] pb-0.5 pl-[26px] text-[#1c2b2b]">
    <button className="flex items-center gap-1 justify-self-start text-left">
      <svg width="37" height="42" viewBox="0 0 37 42">
        <path d="M2 12c7 7 12 13 22 15" fill="none" stroke="#2c9a2c" strokeWidth="3" />
        <path d="M20 31l8-4V20z" fill="#46b02e" />
        <path d="M0 25h5v14H0z" fill="#2c9a2c" />
        <path d="M8 30h4v9H8zM15 33h4v6h-4z" fill="#46b02e" />
        <path d="M21 35h3v4h-3zM26 36h3v3h-3z" fill="#66c430" />
        <circle cx="25" cy="11" r="10.500" fill="#c7281c" />
        <text x="25" y="16" textAnchor="middle" fontSize="14" fill="#fff" fontFamily="Noto Sans, sans-serif">1</text>
      </svg>
      <span className="flex flex-col text-base leading-[21px]">
        恒生指数
        <span className="text-[#1f7f2f]">-1.26%</span>
      </span>
    </button>

    <div className="flex items-center">
      <button aria-label="开始菜单" className="mr-5">
        <svg width="31" height="31" viewBox="0 0 31 31">
          <defs>
            <linearGradient id="win" x1="0" y1="0" x2="1" y2="1">
              <stop offset="0" stopColor="#4cc7f7" />
              <stop offset="1" stopColor="#0a6fd0" />
            </linearGradient>
          </defs>
          <path d="M0 0h15v15H0zM16 0h15v15H16zM0 16h15v15H0zM16 16h15v15H16z" fill="url(#win)" />
        </svg>
      </button>
      <label className="flex h-[41px] w-[289px] items-center rounded-full bg-white pr-2 pl-3.5 shadow-[0_1px_1px_#b5cccc]">
        <svg width="20" height="20" viewBox="0 0 20 20" fill="none" stroke="#222" strokeWidth="2">
          <circle cx="8.500" cy="8.500" r="7" />
          <path d="M13.500 13.500L19 19" />
        </svg>
        <input
          type="search"
          aria-label="搜索任务栏"
          placeholder="搜索"
          className="ml-3.5 min-w-0 flex-1 bg-transparent text-lg leading-6 outline-none placeholder:text-[#445]"
        />
        <span className="flex gap-1">
          <Stamp petal="#e8557c" center="#d8305c" />
          <Stamp petal="#f0b020" center="#5a3210" />
        </span>
      </label>
      <div className="ml-[7px] flex gap-[9px]">
        {apps.map((a) => (
          <button
            key={a.name}
            aria-label={a.name}
            className={
              a.state === 'active'
                ? 'flex h-[50px] w-[50px] flex-col items-center justify-between rounded bg-[#f3ffff]'
                : 'flex h-[50px] w-[50px] flex-col items-center justify-between'
            }
          >
            <span className="flex h-[46px] items-center pt-1">{a.icon}</span>
            {a.state === 'active' && <span className="h-1 w-5 rounded-full bg-[#1f7f86]" />}
            {a.state === 'open' && <span className="h-1 w-2 rounded-full bg-[#6a9a9a]" />}
          </button>
        ))}
      </div>
    </div>

    <div className="flex items-center justify-self-end pr-2.5 whitespace-nowrap">
      <button aria-label="显示隐藏的图标">
        <svg width="15" height="9" viewBox="0 0 15 9" fill="none" stroke="currentColor" strokeWidth="1.500">
          <path d="M1 8l6.500-6.500L14 8" />
        </svg>
      </button>
      <button aria-label="OneDrive" className="ml-6">
        <svg width="23" height="16" viewBox="0 0 23 16" stroke="#1c1c1c" strokeWidth="1.500">
          <path d="M6 15c-7 0-6-9 0-9 2-6 10-6 11 0 7 1 7 9 0 9z" fill="#f2f2f2" />
          <path d="M3 10C3 6 7 6 8 6c2-4 7-4 8 0-4 0-7 4-13 4z" fill="#999" stroke="none" />
        </svg>
      </button>
      <button aria-label="360" className="ml-5">
        <svg width="20" height="20" viewBox="0 0 20 20">
          <circle cx="10" cy="10" r="9.500" fill="#f7e21c" />
          <path d="M1 7C4-1 15-1 18 5c-4-2-10-3-17 2zM19 12c-2 8-13 10-17 3 6 2 12 1 17-3z" fill="#1f9a3d" />
          <path d="M10 6.500v7M6.500 10h7" stroke="#1f8a3a" strokeWidth="2" />
        </svg>
      </button>
      <button className="ml-[22px] text-xl leading-6">英</button>
      <button className="ml-[31px] text-xl leading-6">拼</button>
      <button aria-label="网络、音量和电池" className="ml-[29px] flex items-center gap-2.5">
        <svg width="22" height="17" viewBox="0 0 22 17" fill="none" stroke="currentColor" strokeWidth="1.500">
          <path d="M1 6c6-6.500 14-6.500 20 0M4 9c4-4.500 10-4.500 14 0M7 12c2.500-2.500 5.500-2.500 8 0" />
          <circle cx="11" cy="14.500" r="1.500" fill="currentColor" />
        </svg>
        <svg width="22" height="18" viewBox="0 0 22 18" fill="none" stroke="currentColor" strokeWidth="1.400">
          <path d="M1 6h4l5-5v16l-5-5H1zM13 6c1.500 2 1.500 4 0 6M16 4c3 3 3 7 0 10M18.500 1.500c4 4 4 11 0 15" />
        </svg>
        <svg width="22" height="18" viewBox="0 0 22 18" fill="none" stroke="currentColor" strokeWidth="1.500">
          <rect x="2" y="5" width="17" height="11" rx="2.500" />
          <path d="M5 8h11v5H5zM20.500 8v5" fill="currentColor" />
          <path d="M5 0L1 6h3L3 10l4-6H4z" fill="currentColor" strokeWidth="1" />
        </svg>
      </button>
      <button className="ml-5 text-right font-['Noto_Sans'] text-base leading-[21px]">
        15:31
        <br />
        2024/9/4
      </button>
      <button aria-label="通知" className="ml-3">
        <svg width="18" height="20" viewBox="0 0 18 20" fill="none" stroke="currentColor" strokeWidth="1.500">
          <path d="M10 2C5 1 3 4 3 8v4l-2 4h15l-1-3M6 17c1 2.500 4 2.500 5 0M12 1h5l-4 5h5M6 7h4l-4 5h4" />
        </svg>
      </button>
    </div>

    <div className="absolute right-0 bottom-0 rounded-tl bg-[#33403fe8] pr-2.5 pl-1 font-['Noto_Sans'] text-[13px] leading-6 text-white">
      2024/09/04 15:31:55
    </div>
  </footer>
);

export default function App() {
  return (
    <div className="flex min-h-screen flex-col bg-[#4c4a4a] font-['Noto_Sans_CJK_SC','Noto_Sans',sans-serif]">
      <header className="bg-[#525354]">
        <TitleBar />
        <TabRow />
      </header>
      <Ribbon />
      <Document />
      <StatusBar />
      <Taskbar />
    </div>
  );
}
